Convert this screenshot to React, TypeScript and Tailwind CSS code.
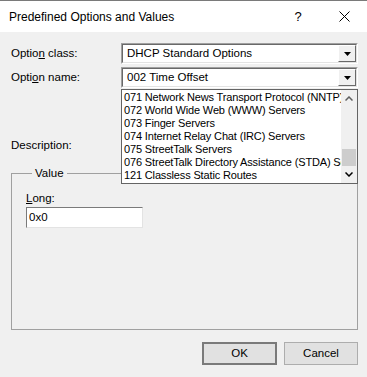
import React from "react";

function Combo({ text }: { text: string }) {
  return (
    <div className="w-[237px] h-[21px] flex border border-t-[#a0a0a0] border-l-[#a0a0a0] border-r-white border-b-white">
      <div className="flex-1 flex border border-t-[#696969] border-l-[#696969] border-r-[#e3e3e3] border-b-[#e3e3e3] bg-white">
        <span className="flex-1 pl-[4px] leading-[17px] text-[11.5px] whitespace-nowrap overflow-hidden">{text}</span>
        <div className="w-[18px] h-full bg-[#f0f0f0] border border-t-white border-l-white border-r-[#696969] border-b-[#696969] flex items-center justify-center">
          <svg width="7" height="4" viewBox="0 0 7 4">
            <path d="M0 0 H7 L3.5 4 Z" fill="#000" />
          </svg>
        </div>
      </div>
    </div>
  );
}

const items = [
  "071 Network News Transport Protocol (NNTP) Servers",
  "072 World Wide Web (WWW) Servers",
  "073 Finger Servers",
  "074 Internet Relay Chat (IRC) Servers",
  "075 StreetTalk Servers",
  "076 StreetTalk Directory Assistance (STDA) Servers",
  "121 Classless Static Routes",
];

export default function App() {
  return (
    <div
      className="relative w-[367px] h-[377px] bg-[#f0f0f0] border-t border-[#7a7a7a] text-black text-[11.5px] overflow-hidden"
      style={{ fontFamily: '"Liberation Sans", Arial, sans-serif' }}
    >
      {/* Title bar */}
      <div className="h-[31px] bg-white flex items-center">
        <span className="pl-[9px] text-[12px] flex-1">Predefined Options and Values</span>
        <span className="w-[46px] text-center text-[13px]">?</span>
        <span className="w-[46px] flex justify-center">
          <svg width="11" height="11" viewBox="0 0 11 11">
            <path d="M0.5 0.5 L10.5 10.5 M10.5 0.5 L0.5 10.5" stroke="#000" strokeWidth="1" />
          </svg>
        </span>
      </div>

      {/* Body */}
      <div className="pl-[11px] pr-[9px] pt-[11px] flex flex-col">
        <div className="flex items-center h-[21px]">
          <span className="w-[110px]">
            Optio<span className="underline">n</span> class:
          </span>
          <Combo text="DHCP Standard Options" />
        </div>
        <div className="flex items-center h-[21px] mt-[3px]">
          <span className="w-[110px]">
            Opti<span className="underline">o</span>n name:
          </span>
          <Combo text="002 Time Offset" />
        </div>

        <div className="mt-[51px] h-[13px] leading-[13px]">Description:</div>

        <fieldset className="mt-[15px] h-[163px] border border-[#a0a0a0] pl-[14px] pr-[14px]">
          <legend className="ml-[6px] px-[3px] leading-[13px]">Value</legend>
          <div className="pt-[12px] leading-[13px]">
            <span className="underline">L</span>ong:
          </div>
          <div className="mt-[2px] w-[117px] h-[21px] bg-white border border-t-[#7a7a7a] border-l-[#7a7a7a] border-r-[#e3e3e3] border-b-[#e3e3e3] pl-[2px] leading-[19px]">
            0x0
          </div>
        </fieldset>

        <div className="mt-[12px] flex justify-end gap-[7px]">
          <div className="w-[75px] h-[23px] bg-[#e1e1e1] border-2 border-[#7a7a7a] flex items-center justify-center">
            OK
          </div>
          <div className="w-[74px] h-[23px] bg-[#e1e1e1] border border-[#adadad] flex items-center justify-center">
            Cancel
          </div>
        </div>
      </div>

      {/* Dropdown list overlay */}
      <div className="absolute left-[121px] top-[88px] w-[237px] h-[95px] bg-white border border-[#646464] flex">
        <div className="flex-1 overflow-hidden pt-[1px] text-[11px]">
          {items.map((t) => (
            <div key={t} className="h-[13px] leading-[13px] pl-[2px] whitespace-nowrap tracking-[-0.15px]">
              {t}
            </div>
          ))}
        </div>
        <div className="w-[16px] h-full bg-[#f0f0f0] flex flex-col">
          <div className="h-[17px] flex items-center justify-center">
            <svg width="8" height="5" viewBox="0 0 8 5">
              <path d="M0.5 4.5 L4 1 L7.5 4.5" stroke="#606060" strokeWidth="1.5" fill="none" />
            </svg>
          </div>
          <div className="mt-[42px] h-[17px] bg-[#cdcdcd] mx-[1px]" />
          <div className="flex-1" />
          <div className="h-[17px] flex items-center justify-center">
            <svg width="8" height="5" viewBox="0 0 8 5">
              <path d="M0.5 0.5 L4 4 L7.5 0.5" stroke="#000" strokeWidth="1.5" fill="none" />
            </svg>
          </div>
        </div>
      </div>
    </div>
  );
}
